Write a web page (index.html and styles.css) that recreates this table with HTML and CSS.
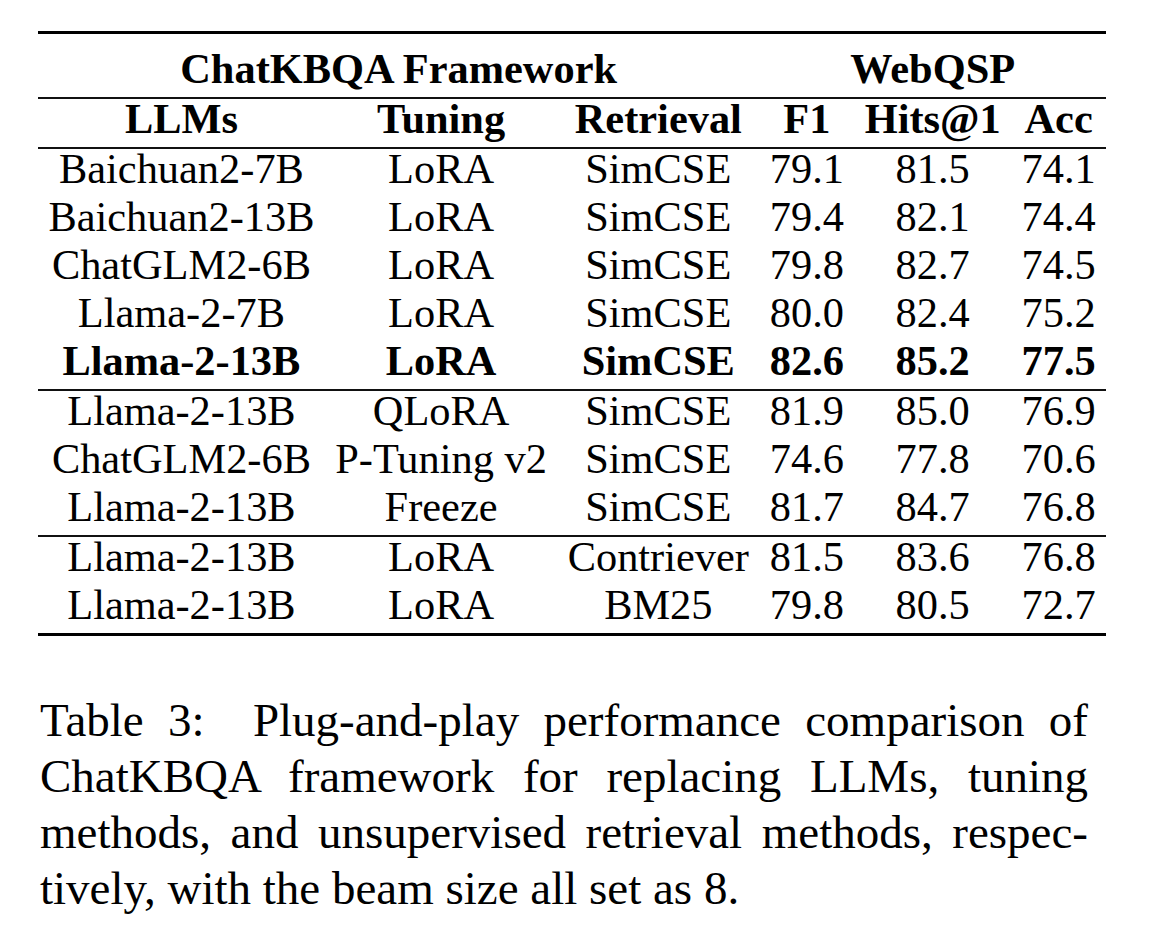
FILE: index.html
```html
<!DOCTYPE html>
<html>
<head>
<meta charset="utf-8">
<link rel="stylesheet" href="styles.css">
</head>
<body class="doc">
<div class="page">
  <table class="results">
    <thead>
      <tr class="group-row">
        <th class="cell hcell" colspan="3">ChatKBQA Framework</th>
        <th class="cell hcell" colspan="3">WebQSP</th>
      </tr>
      <tr class="head-row">
        <th class="cell hcell">LLMs</th>
        <th class="cell hcell">Tuning</th>
        <th class="cell hcell">Retrieval</th>
        <th class="cell hcell">F1</th>
        <th class="cell hcell">Hits@1</th>
        <th class="cell hcell">Acc</th>
      </tr>
    </thead>
    <tbody>
      <tr class="row first"><td class="cell">Baichuan2-7B</td><td class="cell">LoRA</td><td class="cell">SimCSE</td><td class="cell">79.1</td><td class="cell">81.5</td><td class="cell">74.1</td></tr>
      <tr class="row"><td class="cell">Baichuan2-13B</td><td class="cell">LoRA</td><td class="cell">SimCSE</td><td class="cell">79.4</td><td class="cell">82.1</td><td class="cell">74.4</td></tr>
      <tr class="row"><td class="cell">ChatGLM2-6B</td><td class="cell">LoRA</td><td class="cell">SimCSE</td><td class="cell">79.8</td><td class="cell">82.7</td><td class="cell">74.5</td></tr>
      <tr class="row"><td class="cell">Llama-2-7B</td><td class="cell">LoRA</td><td class="cell">SimCSE</td><td class="cell">80.0</td><td class="cell">82.4</td><td class="cell">75.2</td></tr>
      <tr class="row best"><td class="cell">Llama-2-13B</td><td class="cell">LoRA</td><td class="cell">SimCSE</td><td class="cell">82.6</td><td class="cell">85.2</td><td class="cell">77.5</td></tr>
      <tr class="row first"><td class="cell">Llama-2-13B</td><td class="cell">QLoRA</td><td class="cell">SimCSE</td><td class="cell">81.9</td><td class="cell">85.0</td><td class="cell">76.9</td></tr>
      <tr class="row"><td class="cell">ChatGLM2-6B</td><td class="cell">P-Tuning v2</td><td class="cell">SimCSE</td><td class="cell">74.6</td><td class="cell">77.8</td><td class="cell">70.6</td></tr>
      <tr class="row"><td class="cell">Llama-2-13B</td><td class="cell">Freeze</td><td class="cell">SimCSE</td><td class="cell">81.7</td><td class="cell">84.7</td><td class="cell">76.8</td></tr>
      <tr class="row first"><td class="cell">Llama-2-13B</td><td class="cell">LoRA</td><td class="cell">Contriever</td><td class="cell">81.5</td><td class="cell">83.6</td><td class="cell">76.8</td></tr>
      <tr class="row last"><td class="cell">Llama-2-13B</td><td class="cell">LoRA</td><td class="cell">BM25</td><td class="cell">79.8</td><td class="cell">80.5</td><td class="cell">72.7</td></tr>
    </tbody>
  </table>
  <div class="caption">
    <div class="cap-line">Table 3:<span class="cap-gap"></span> Plug-and-play performance comparison of</div>
    <div class="cap-line">ChatKBQA framework for replacing LLMs, tuning</div>
    <div class="cap-line">methods, and unsupervised retrieval methods, respec-</div>
    <div class="cap-line cap-end">tively, with the beam size all set as 8.</div>
  </div>
</div>
</body>
</html>
```

FILE: styles.css
```css
.doc {
  margin: 0;
  padding: 0;
  background: #ffffff;
}

.page {
  width: 1156px;
  height: 938px;
  padding-top: 31px;
  box-sizing: border-box;
  font-family: "Liberation Serif", serif;
  color: #000000;
  background: #ffffff;
}

.results {
  border-collapse: collapse;
  margin-left: 38px;
  font-family: "Liberation Serif", serif;
  font-size: 42.4px;
  line-height: 40px;
}

.cell {
  font-family: "Liberation Serif", serif;
  font-weight: normal;
  padding: 0 10.4px 8px 10.4px;
  text-align: center;
  white-space: nowrap;
  vertical-align: top;
  height: 40px;
}

.hcell {
  font-weight: bold;
}

.group-row .cell {
  border-top: 3px solid #000;
  padding-top: 15px;
}

.head-row .cell {
  border-top: 2px solid #111;
}

.row.first .cell {
  border-top: 2px solid #111;
}

.row.best .cell {
  font-weight: bold;
}

.row.last .cell {
  border-bottom: 3px solid #000;
}

.caption {
  margin-top: 56px;
  margin-left: 40px;
  width: 1048px;
  font-family: "Liberation Serif", serif;
  font-size: 47px;
  line-height: 56px;
}

.cap-line {
  text-align: justify;
  text-align-last: justify;
  white-space: nowrap;
}

.cap-line.cap-end {
  text-align-last: left;
}

.cap-gap {
  display: inline-block;
  width: 24px;
}
```
